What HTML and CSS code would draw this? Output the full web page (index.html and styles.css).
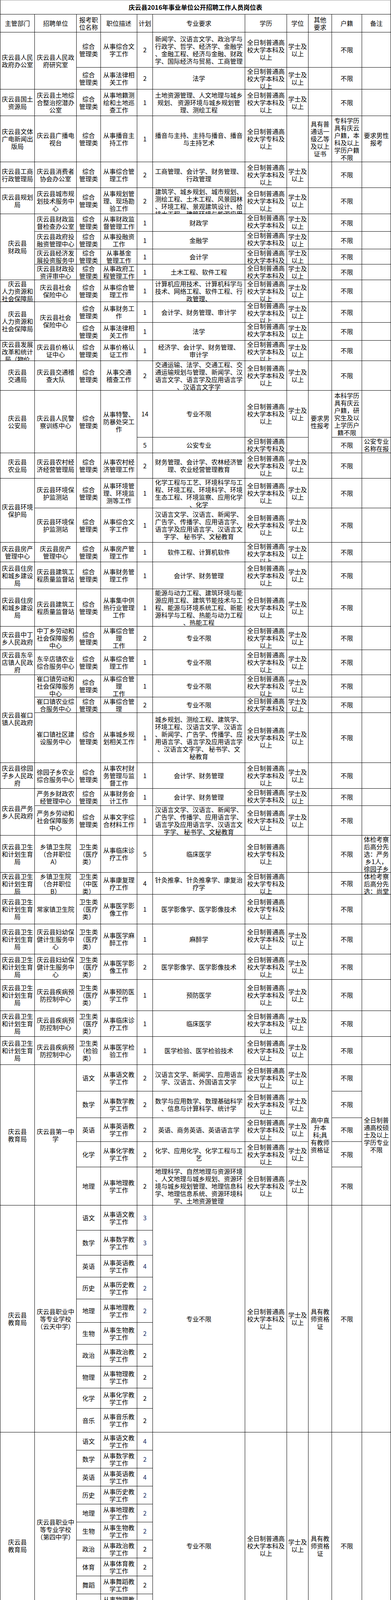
FILE: index.html
```html
<!DOCTYPE html>
<html lang="zh-CN">
<head>
<meta charset="utf-8">
<title>庆云县2016年事业单位公开招聘工作人员岗位表</title>
<link rel="stylesheet" href="styles.css">
</head>
<body>
<div class="sheet">
  <div class="c title"><span>庆云县2016年事业单位公开招聘工作人员岗位表</span></div>

  <div class="c"><span>主管部门</span></div>
  <div class="c"><span>招聘单位</span></div>
  <div class="c"><span>报考职<br>位名称</span></div>
  <div class="c"><span>职位描述</span></div>
  <div class="c"><span>计划</span></div>
  <div class="c"><span>专业要求</span></div>
  <div class="c"><span>学历</span></div>
  <div class="c"><span>学位</span></div>
  <div class="c"><span>其他<br>要求</span></div>
  <div class="c"><span>户籍</span></div>
  <div class="c"><span>备注</span></div>

  <!-- 政府办 -->
  <div class="c r2"><span>庆云县人民<br>政府办公室</span></div>
  <div class="c r2"><span>庆云县人民政<br>府研究室</span></div>
  <div class="c"><span>综合<br>管理类</span></div>
  <div class="c"><span>从事综合文<br>字工作</span></div>
  <div class="c"><span>2</span></div>
  <div class="c"><span>新闻学、汉语言文学、政治学与<br>行政学、哲学、经济学、金融学<br>、金融工程、经济与金融、财政<br>学、国际经济与贸易、工商管理</span></div>
  <div class="c"><span>全日制普通高<br>校大学本科及<br>以上</span></div>
  <div class="c"><span>学士及<br>以上</span></div>
  <div class="c"></div>
  <div class="c"><span>不限</span></div>
  <div class="c"></div>

  <div class="c"><span>综合<br>管理类</span></div>
  <div class="c"><span>从事法律相<br>关工作</span></div>
  <div class="c"><span>2</span></div>
  <div class="c"><span>法学</span></div>
  <div class="c"><span>全日制普通高<br>校大学本科及<br>以上</span></div>
  <div class="c"><span>学士及<br>以上</span></div>
  <div class="c"></div>
  <div class="c"><span>不限</span></div>
  <div class="c"></div>

  <!-- 国土 -->
  <div class="c"><span>庆云县国土<br>资源局</span></div>
  <div class="c"><span>庆云县土地综<br>合整治挖潜办<br>公室</span></div>
  <div class="c"><span>综合<br>管理类</span></div>
  <div class="c"><span>从事地籍测<br>绘和土地巡<br>查工作</span></div>
  <div class="c"><span>1</span></div>
  <div class="c"><span>土地资源管理、人文地理与城乡<br>规划、 资源环境与城乡规划管<br>理、测绘工程</span></div>
  <div class="c"><span>全日制普通高<br>校大学本科及<br>以上</span></div>
  <div class="c"><span>学士及<br>以上</span></div>
  <div class="c"></div>
  <div class="c"><span>不限</span></div>
  <div class="c"></div>

  <!-- 文体 -->
  <div class="c"><span>庆云县文体<br>广电新闻出<br>版局</span></div>
  <div class="c"><span>庆云县广播电<br>视台</span></div>
  <div class="c"><span>综合<br>管理类</span></div>
  <div class="c"><span>从事播音主<br>持工作</span></div>
  <div class="c"><span>1</span></div>
  <div class="c"><span>播音与主持、主持与播音、播音<br>与主持艺术</span></div>
  <div class="c"><span>全日制普通高<br>校大学专科及<br>以上</span></div>
  <div class="c"></div>
  <div class="c"><span>具有普<br>通话一<br>级乙等<br>及以上<br>证书</span></div>
  <div class="c"><span>专科学历<br>具有庆云<br>户籍，本<br>科及以上<br>学历户籍<br>不限</span></div>
  <div class="c"><span>要求男性<br>报考</span></div>

  <!-- 工商 -->
  <div class="c"><span>庆云县工商<br>行政管理局</span></div>
  <div class="c"><span>庆云县消费者<br>协会办公室</span></div>
  <div class="c"><span>综合<br>管理类</span></div>
  <div class="c"><span>从事综合管<br>理工作</span></div>
  <div class="c"><span>2</span></div>
  <div class="c"><span>工商管理、会计学、财务管理、<br>行政管理</span></div>
  <div class="c"><span>全日制普通高<br>校大学本科及<br>以上</span></div>
  <div class="c"><span>学士及<br>以上</span></div>
  <div class="c"></div>
  <div class="c"><span>不限</span></div>
  <div class="c"></div>

  <!-- 规划 -->
  <div class="c"><span>庆云县规划<br>局</span></div>
  <div class="c"><span>庆云县城市规<br>划技术服务中<br>心</span></div>
  <div class="c"><span>综合<br>管理类</span></div>
  <div class="c"><span>从事规划管<br>理、现场勘<br>验工作</span></div>
  <div class="c"><span>2</span></div>
  <div class="c"><span>建筑学、城乡规划、城市规划、<br>测绘工程、土木工程、风景园林<br>、环境工程、景观建筑设计、给<br>排水工程、建筑环境与能源应用<br>工程</span></div>
  <div class="c"><span>全日制普通高<br>校大学本科及<br>以上</span></div>
  <div class="c"><span>学士及<br>以上</span></div>
  <div class="c"></div>
  <div class="c"><span>不限</span></div>
  <div class="c"></div>

  <!-- 财政 -->
  <div class="c r4"><span>庆云县<br>财政局</span></div>
  <div class="c"><span>庆云县财政监<br>督检查办公室</span></div>
  <div class="c"><span>综合<br>管理类</span></div>
  <div class="c"><span>从事财政监<br>督管理工作</span></div>
  <div class="c"><span>1</span></div>
  <div class="c"><span>财政学</span></div>
  <div class="c"><span>全日制普通高<br>校大学本科及<br>以上</span></div>
  <div class="c"><span>学士及<br>以上</span></div>
  <div class="c"></div>
  <div class="c"><span>不限</span></div>
  <div class="c"></div>

  <div class="c"><span>庆云县政府投<br>融资管理中心</span></div>
  <div class="c"><span>综合<br>管理类</span></div>
  <div class="c"><span>从事投融资<br>工作</span></div>
  <div class="c"><span>1</span></div>
  <div class="c"><span>金融学</span></div>
  <div class="c"><span>全日制普通高<br>校大学本科及<br>以上</span></div>
  <div class="c"><span>学士及<br>以上</span></div>
  <div class="c"></div>
  <div class="c"><span>不限</span></div>
  <div class="c"></div>

  <div class="c"><span>庆云县经济发<br>展投资服务中<br>心</span></div>
  <div class="c"><span>综合<br>管理类</span></div>
  <div class="c"><span>从事基金<br>管理工作</span></div>
  <div class="c"><span>1</span></div>
  <div class="c"><span>会计学</span></div>
  <div class="c"><span>全日制普通高<br>校大学本科及<br>以上</span></div>
  <div class="c"><span>学士及<br>以上</span></div>
  <div class="c"></div>
  <div class="c"><span>不限</span></div>
  <div class="c"></div>

  <div class="c"><span>庆云县财政投<br>资评审中心</span></div>
  <div class="c"><span>综合<br>管理类</span></div>
  <div class="c"><span>从事政府工<br>程管理工作</span></div>
  <div class="c"><span>1</span></div>
  <div class="c"><span>土木工程、软件工程</span></div>
  <div class="c"><span>全日制普通高<br>校大学本科及<br>以上</span></div>
  <div class="c"><span>学士及<br>以上</span></div>
  <div class="c"></div>
  <div class="c"><span>不限</span></div>
  <div class="c"></div>

  <!-- 人社 1 -->
  <div class="c"><span>庆云县<br>人力资源和<br>社会保障局</span></div>
  <div class="c"><span>庆云县社会<br>保险中心</span></div>
  <div class="c"><span>综合<br>管理类</span></div>
  <div class="c"><span>从事综合管<br>理工作</span></div>
  <div class="c"><span>1</span></div>
  <div class="c"><span>计算机应用技术、计算机科学与<br>技术、网络工程、软件工程、行<br>政管理、</span></div>
  <div class="c"><span>全日制普通高<br>校大学本科及<br>以上</span></div>
  <div class="c"><span>学士及<br>以上</span></div>
  <div class="c"></div>
  <div class="c"><span>不限</span></div>
  <div class="c"></div>

  <!-- 人社 2 -->
  <div class="c r2"><span>庆云县<br>人力资源和<br>社会保障局</span></div>
  <div class="c r2"><span>庆云县社会<br>保险中心</span></div>
  <div class="c"><span>综合<br>管理类</span></div>
  <div class="c"><span>从事财务工<br>作</span></div>
  <div class="c"><span>1</span></div>
  <div class="c"><span>会计学、财务管理、审计学</span></div>
  <div class="c"><span>全日制普通高<br>校大学本科及<br>以上</span></div>
  <div class="c"><span>学士及<br>以上</span></div>
  <div class="c"></div>
  <div class="c"><span>不限</span></div>
  <div class="c"></div>

  <div class="c"><span>综合<br>管理类</span></div>
  <div class="c"><span>从事法律相<br>关工作</span></div>
  <div class="c"><span>1</span></div>
  <div class="c"><span>法学</span></div>
  <div class="c"><span>全日制普通高<br>校大学本科及<br>以上</span></div>
  <div class="c"><span>学士及<br>以上</span></div>
  <div class="c"></div>
  <div class="c"><span>不限</span></div>
  <div class="c"></div>

  <!-- 发改 -->
  <div class="c"><span>庆云县发展<br>改革和统计<br>局（物价<br>局）</span></div>
  <div class="c"><span>庆云县价格认<br>证中心</span></div>
  <div class="c"><span>综合<br>管理类</span></div>
  <div class="c"><span>从事价格认<br>证工作</span></div>
  <div class="c"><span>1</span></div>
  <div class="c"><span>经济学、会计学、财务管理、<br>审计学</span></div>
  <div class="c"><span>全日制普通高<br>校大学本科及<br>以上</span></div>
  <div class="c"><span>学士及<br>以上</span></div>
  <div class="c"></div>
  <div class="c"><span>不限</span></div>
  <div class="c"></div>

  <!-- 交通 -->
  <div class="c"><span>庆云县<br>交通局</span></div>
  <div class="c"><span>庆云县交通稽<br>查大队</span></div>
  <div class="c"><span>综合<br>管理类</span></div>
  <div class="c"><span>从事交通<br>稽查工作</span></div>
  <div class="c"><span>2</span></div>
  <div class="c"><span>交通运输、法学、交通工程、交<br>通运输规划与管理、新闻学、汉<br>语言文学、语言学及应用语言学<br>、汉语言文字学</span></div>
  <div class="c"><span>全日制普通高<br>校大学本科及<br>以上</span></div>
  <div class="c"><span>学士及<br>以上</span></div>
  <div class="c"></div>
  <div class="c"><span>不限</span></div>
  <div class="c"></div>

  <!-- 公安 -->
  <div class="c r2"><span>庆云县<br>公安局</span></div>
  <div class="c r2"><span>庆云县人民警<br>察训练中心</span></div>
  <div class="c r2"><span>综合<br>管理类</span></div>
  <div class="c r2"><span>从事特警、<br>防暴处突工<br>作</span></div>
  <div class="c"><span>14</span></div>
  <div class="c"><span>专业不限</span></div>
  <div class="c"><span>全日制普通高<br>校大学本科及<br>以上</span></div>
  <div class="c"><span>学士及<br>以上</span></div>
  <div class="c r2"><span>要求男<br>性报考</span></div>
  <div class="c"><span>本科学历<br>具有庆云<br>户籍，研<br>究生及以<br>上学历户<br>籍不限</span></div>
  <div class="c"></div>

  <div class="c"><span>5</span></div>
  <div class="c"><span>公安专业</span></div>
  <div class="c"><span>全日制普通高<br>校大学专科及<br>以上</span></div>
  <div class="c"></div>
  <div class="c"><span>不限</span></div>
  <div class="c"><span>公安专业<br>名称在报<br>考时以毕<br>业证为准</span></div>

  <!-- 农业 -->
  <div class="c"><span>庆云县<br>农业局</span></div>
  <div class="c"><span>庆云县农村经<br>济经营管理局</span></div>
  <div class="c"><span>综合<br>管理类</span></div>
  <div class="c"><span>从事农村经<br>济管理工作</span></div>
  <div class="c"><span>2</span></div>
  <div class="c"><span>财务管理、会计学、农林经济管<br>理、农业经营管理教育</span></div>
  <div class="c"><span>全日制普通高<br>校大学本科及<br>以上</span></div>
  <div class="c"><span>学士及<br>以上</span></div>
  <div class="c"></div>
  <div class="c"><span>不限</span></div>
  <div class="c"></div>

  <!-- 环保 -->
  <div class="c r2"><span>庆云县环境<br>保护局</span></div>
  <div class="c"><span>庆云县环境保<br>护监测站</span></div>
  <div class="c"><span>综合<br>管理类</span></div>
  <div class="c"><span>从事环境管<br>理、环境监<br>测等工作</span></div>
  <div class="c"><span>1</span></div>
  <div class="c"><span>化学工程与工艺、环境科学与工<br>程、环境工程、环境科学、环境<br>生态工程、环境监察、应用化学<br>、化学</span></div>
  <div class="c"><span>全日制普通高<br>校大学本科及<br>以上</span></div>
  <div class="c"><span>学士及<br>以上</span></div>
  <div class="c"></div>
  <div class="c"><span>不限</span></div>
  <div class="c"></div>

  <div class="c"><span>庆云县环境保<br>护监测站</span></div>
  <div class="c"><span>综合<br>管理类</span></div>
  <div class="c"><span>从事综合文<br>字工作</span></div>
  <div class="c"><span>1</span></div>
  <div class="c"><span>汉语言文学、汉语言、新闻学、<br>广告学、传播学、应用语言学、<br>语言学及应用语言学、汉语言文<br>字学、 秘书学、文秘教育</span></div>
  <div class="c"><span>全日制普通高<br>校大学本科及<br>以上</span></div>
  <div class="c"><span>学士及<br>以上</span></div>
  <div class="c"></div>
  <div class="c"><span>不限</span></div>
  <div class="c"></div>

  <!-- 房产 -->
  <div class="c"><span>庆云县房产<br>管理中心</span></div>
  <div class="c"><span>庆云县房产<br>管理中心</span></div>
  <div class="c"><span>综合<br>管理类</span></div>
  <div class="c"><span>从事房产管<br>理工作</span></div>
  <div class="c"><span>1</span></div>
  <div class="c"><span>软件工程、计算机软件</span></div>
  <div class="c"><span>全日制普通高<br>校大学本科及<br>以上</span></div>
  <div class="c"><span>学士及<br>以上</span></div>
  <div class="c"></div>
  <div class="c"><span>不限</span></div>
  <div class="c"></div>

  <!-- 住建 -->
  <div class="c"><span>庆云县住房<br>和城乡建设<br>局</span></div>
  <div class="c"><span>庆云县建筑工<br>程质量监督站</span></div>
  <div class="c"><span>综合<br>管理类</span></div>
  <div class="c"><span>从事财务管<br>理工作</span></div>
  <div class="c"><span>1</span></div>
  <div class="c"><span>会计学、财务管理</span></div>
  <div class="c"><span>全日制普通高<br>校大学本科及<br>以上</span></div>
  <div class="c"><span>学士及<br>以上</span></div>
  <div class="c"></div>
  <div class="c"><span>不限</span></div>
  <div class="c"></div>

  <div class="c"><span>庆云县住房<br>和城乡建设<br>局</span></div>
  <div class="c"><span>庆云县建筑工<br>程质量监督站</span></div>
  <div class="c"><span>综合<br>管理类</span></div>
  <div class="c"><span>从事集中供<br>热行业管理<br>工作</span></div>
  <div class="c"><span>1</span></div>
  <div class="c"><span>能源与动力工程、建筑环境与能<br>源应用工程、建筑节能技术与工<br>程、能源与环境系统工程、新能<br>源科学与工程、热能与动力工程<br>、热能工程</span></div>
  <div class="c"><span>全日制普通高<br>校大学本科及<br>以上</span></div>
  <div class="c"><span>学士及<br>以上</span></div>
  <div class="c"></div>
  <div class="c"><span>不限</span></div>
  <div class="c"></div>

  <!-- 中丁 -->
  <div class="c"><span>庆云县中丁<br>乡人民政府</span></div>
  <div class="c"><span>中丁乡劳动和<br>社会保障服务<br>中心</span></div>
  <div class="c"><span>综合<br>管理类</span></div>
  <div class="c"><span>从事综合管<br>理<br>工作</span></div>
  <div class="c"><span>2</span></div>
  <div class="c"><span>专业不限</span></div>
  <div class="c"><span>全日制普通高<br>校大学本科及<br>以上</span></div>
  <div class="c"><span>学士及<br>以上</span></div>
  <div class="c"></div>
  <div class="c"><span>不限</span></div>
  <div class="c"></div>

  <!-- 东辛店 -->
  <div class="c"><span>庆云县东辛<br>店镇人民政<br>府</span></div>
  <div class="c"><span>东辛店镇农业<br>综合服务中心</span></div>
  <div class="c"><span>综合<br>管理类</span></div>
  <div class="c"><span>从事综合管<br>理工作</span></div>
  <div class="c"><span>1</span></div>
  <div class="c"><span>专业不限</span></div>
  <div class="c"><span>全日制普通高<br>校大学本科及<br>以上</span></div>
  <div class="c"><span>学士及<br>以上</span></div>
  <div class="c"></div>
  <div class="c"><span>不限</span></div>
  <div class="c"></div>

  <!-- 崔口 -->
  <div class="c r3"><span>庆云县崔口<br>镇人民政府</span></div>
  <div class="c"><span>崔口镇劳动和<br>社会保障服务<br>中心</span></div>
  <div class="c"><span>综合<br>管理类</span></div>
  <div class="c"><span>从事综合管<br>理<br>工作</span></div>
  <div class="c"><span>1</span></div>
  <div class="c"><span>专业不限</span></div>
  <div class="c"><span>全日制普通高<br>校大学本科及<br>以上</span></div>
  <div class="c"><span>学士及<br>以上</span></div>
  <div class="c"></div>
  <div class="c"><span>不限</span></div>
  <div class="c"></div>

  <div class="c"><span>崔口镇农业综<br>合服务中心</span></div>
  <div class="c"><span>综合<br>管理类</span></div>
  <div class="c"><span>从事综合管<br>理</span></div>
  <div class="c"><span>2</span></div>
  <div class="c"><span>专业不限</span></div>
  <div class="c"><span>全日制普通高<br>校大学本科及<br>以上</span></div>
  <div class="c"><span>学士及<br>以上</span></div>
  <div class="c"></div>
  <div class="c"><span>不限</span></div>
  <div class="c"></div>

  <div class="c"><span>崔口镇社区建<br>设服务中心</span></div>
  <div class="c"><span>综合<br>管理类</span></div>
  <div class="c"><span>从事城乡规<br>划相关工作</span></div>
  <div class="c"><span>1</span></div>
  <div class="c"><span>城乡规划、测绘工程、建筑学、<br>环境工程、汉语言文学、汉语言<br>、新闻学、广告学、传播学、应<br>用语言学、语言学及应用语言学<br>、汉语言文字学、 秘书学、文<br>秘教育</span></div>
  <div class="c"><span>全日制普通高<br>校大学本科及<br>以上</span></div>
  <div class="c"><span>学士及<br>以上</span></div>
  <div class="c"></div>
  <div class="c"><span>不限</span></div>
  <div class="c"></div>

  <!-- 徐园子 -->
  <div class="c"><span>庆云县徐园<br>子乡人民政<br>府</span></div>
  <div class="c"><span>徐园子乡农业<br>综合服务中心</span></div>
  <div class="c"><span>综合<br>管理类</span></div>
  <div class="c"><span>从事农村财<br>务管理与监<br>督工作</span></div>
  <div class="c"><span>1</span></div>
  <div class="c"><span>会计学、财务管理</span></div>
  <div class="c"><span>全日制普通高<br>校大学本科及<br>以上</span></div>
  <div class="c"><span>学士及<br>以上</span></div>
  <div class="c"></div>
  <div class="c"><span>不限</span></div>
  <div class="c"></div>

  <!-- 严务 -->
  <div class="c r2"><span>庆云县严务<br>乡人民政府</span></div>
  <div class="c"><span>严务乡财政农<br>经管理中心</span></div>
  <div class="c"><span>综合<br>管理类</span></div>
  <div class="c"><span>从事财务会<br>计工作</span></div>
  <div class="c"><span>1</span></div>
  <div class="c"><span>会计学、财务管理</span></div>
  <div class="c"><span>全日制普通高<br>校大学本科及<br>以上</span></div>
  <div class="c"><span>学士及<br>以上</span></div>
  <div class="c"></div>
  <div class="c"><span>不限</span></div>
  <div class="c"></div>

  <div class="c"><span>严务乡劳动和<br>社会保障服务<br>中心</span></div>
  <div class="c"><span>综合<br>管理类</span></div>
  <div class="c"><span>从事文字综<br>合材料工作</span></div>
  <div class="c"><span>1</span></div>
  <div class="c"><span>汉语言文学、汉语言、新闻学、<br>广告学、传播学、应用语言学、<br>语言学及应用语言学、汉语言文<br>字学、 秘书学、文秘教育</span></div>
  <div class="c"><span>全日制普通高<br>校大学本科及<br>以上</span></div>
  <div class="c"><span>学士及<br>以上</span></div>
  <div class="c"></div>
  <div class="c"><span>不限</span></div>
  <div class="c"></div>

  <!-- 卫生 A -->
  <div class="c"><span>庆云县卫生<br>和计划生育<br>局</span></div>
  <div class="c"><span>乡镇卫生院<br>（合并职位<br>A）</span></div>
  <div class="c"><span>卫生类<br>（医疗<br>类）</span></div>
  <div class="c"><span>从事临床诊<br>疗工作</span></div>
  <div class="c"><span>5</span></div>
  <div class="c"><span>临床医学</span></div>
  <div class="c"><span>全日制普通高<br>校大学专科及<br>以上</span></div>
  <div class="c"></div>
  <div class="c"></div>
  <div class="c"><span>不限</span></div>
  <div class="c"><span>体检考察<br>后高分先<br>选：严务<br>乡1人，<br>徐园子乡<br>1人，中丁<br>乡1人</span></div>

  <!-- 卫生 B -->
  <div class="c"><span>庆云县卫生<br>和计划生育<br>局</span></div>
  <div class="c"><span>乡镇卫生院<br>（合并职位<br>B）</span></div>
  <div class="c"><span>卫生类<br>（中医<br>类）</span></div>
  <div class="c"><span>从事康复理<br>疗工作</span></div>
  <div class="c"><span>4</span></div>
  <div class="c"><span>针灸推拿、针灸推拿学、康复治<br>疗学</span></div>
  <div class="c"><span>全日制普通高<br>校大学专科及<br>以上</span></div>
  <div class="c"></div>
  <div class="c"></div>
  <div class="c"><span>不限</span></div>
  <div class="c"><span>体检考察<br>后高分先<br>选：尚堂<br>镇1人</span></div>

  <!-- 常家镇 -->
  <div class="c"><span>庆云县卫生<br>和计划生育<br>局</span></div>
  <div class="c"><span>常家镇卫生院</span></div>
  <div class="c"><span>卫生类<br>（医疗<br>类）</span></div>
  <div class="c"><span>从事医学影<br>像工作</span></div>
  <div class="c"><span>1</span></div>
  <div class="c"><span>医学影像学、医学影像技术</span></div>
  <div class="c"><span>全日制普通高<br>校大学专科及<br>以上</span></div>
  <div class="c"></div>
  <div class="c"></div>
  <div class="c"><span>不限</span></div>
  <div class="c"></div>

  <!-- 妇幼 -->
  <div class="c"><span>庆云县卫生<br>和计划生育<br>局</span></div>
  <div class="c"><span>庆云县妇幼保<br>健计生服务中<br>心</span></div>
  <div class="c"><span>卫生类<br>（医疗<br>类）</span></div>
  <div class="c"><span>从事医学麻<br>醉工作</span></div>
  <div class="c"><span>1</span></div>
  <div class="c"><span>麻醉学</span></div>
  <div class="c"><span>全日制普通高<br>校大学本科及<br>以上</span></div>
  <div class="c"><span>学士及<br>以上</span></div>
  <div class="c"></div>
  <div class="c"><span>不限</span></div>
  <div class="c"></div>

  <div class="c"><span>庆云县卫生<br>和计划生育<br>局</span></div>
  <div class="c"><span>庆云县妇幼保<br>健计生服务中<br>心</span></div>
  <div class="c"><span>卫生类<br>（医疗<br>类）</span></div>
  <div class="c"><span>从事医学影<br>像工作</span></div>
  <div class="c"><span>2</span></div>
  <div class="c"><span>医学影像学、医学影像技术</span></div>
  <div class="c"><span>全日制普通高<br>校大学本科及<br>以上</span></div>
  <div class="c"><span>学士及<br>以上</span></div>
  <div class="c"></div>
  <div class="c"><span>不限</span></div>
  <div class="c"></div>

  <!-- 疾控 -->
  <div class="c"><span>庆云县卫生<br>和计划生育<br>局</span></div>
  <div class="c"><span>庆云县疾病预<br>防控制中心</span></div>
  <div class="c"><span>卫生类<br>（医疗<br>类）</span></div>
  <div class="c"><span>从事预防医<br>学工作</span></div>
  <div class="c"><span>1</span></div>
  <div class="c"><span>预防医学</span></div>
  <div class="c"><span>全日制普通高<br>校大学本科及<br>以上</span></div>
  <div class="c"><span>学士及<br>以上</span></div>
  <div class="c"></div>
  <div class="c"><span>不限</span></div>
  <div class="c"></div>

  <div class="c"><span>庆云县卫生<br>和计划生育<br>局</span></div>
  <div class="c"><span>庆云县疾病预<br>防控制中心</span></div>
  <div class="c"><span>卫生类<br>（医疗<br>类）</span></div>
  <div class="c"><span>从事临床诊<br>疗工作</span></div>
  <div class="c"><span>1</span></div>
  <div class="c"><span>临床医学</span></div>
  <div class="c"><span>全日制普通高<br>校大学本科及<br>以上</span></div>
  <div class="c"><span>学士及<br>以上</span></div>
  <div class="c"></div>
  <div class="c"><span>不限</span></div>
  <div class="c"></div>

  <div class="c"><span>庆云县卫生<br>和计划生育<br>局</span></div>
  <div class="c"><span>庆云县疾病预<br>防控制中心</span></div>
  <div class="c"><span>卫生类<br>（检验<br>类）</span></div>
  <div class="c"><span>从事医学检<br>验工作</span></div>
  <div class="c"><span>1</span></div>
  <div class="c"><span>医学检验、医学检验技术</span></div>
  <div class="c"><span>全日制普通高<br>校大学本科及<br>以上</span></div>
  <div class="c"><span>学士及<br>以上</span></div>
  <div class="c"></div>
  <div class="c"><span>不限</span></div>
  <div class="c"></div>

  <!-- 第一中学 -->
  <div class="c r5"><span>庆云县<br>教育局</span></div>
  <div class="c r5"><span>庆云县第一中<br>学</span></div>
  <div class="c"><span>语文</span></div>
  <div class="c"><span>从事语文教<br>学工作</span></div>
  <div class="c"><span>2</span></div>
  <div class="c"><span>汉语言文学、新闻学、应用语言<br>学、汉语言、外国语言文学</span></div>
  <div class="c"><span>全日制普通高<br>校大学本科及<br>以上</span></div>
  <div class="c"><span>学士及<br>以上</span></div>
  <div class="c r5"><span>高中直<br>升本<br>科;具<br>有教师<br>资格证</span></div>
  <div class="c"><span>不限</span></div>
  <div class="c r5"><span>全日制普<br>通高校硕<br>士及以上<br>学历专业<br>不限</span></div>

  <div class="c"><span>数学</span></div>
  <div class="c"><span>从事数学教<br>学工作</span></div>
  <div class="c"><span>2</span></div>
  <div class="c"><span>数学与应用数学、数理基础科学<br>、信息与计算科学、统计学</span></div>
  <div class="c"><span>全日制普通高<br>校大学本科及<br>以上</span></div>
  <div class="c"><span>学士及<br>以上</span></div>
  <div class="c"><span>不限</span></div>

  <div class="c"><span>英语</span></div>
  <div class="c"><span>从事英语教<br>学工作</span></div>
  <div class="c"><span>2</span></div>
  <div class="c"><span>英语、商务英语、英语语言学</span></div>
  <div class="c"><span>全日制普通高<br>校大学本科及<br>以上</span></div>
  <div class="c"><span>学士及<br>以上</span></div>
  <div class="c"><span>不限</span></div>

  <div class="c"><span>化学</span></div>
  <div class="c"><span>从事化学教<br>学工作</span></div>
  <div class="c"><span>2</span></div>
  <div class="c"><span>化学、应用化学、化学工程与工<br>艺</span></div>
  <div class="c"><span>全日制普通高<br>校大学本科及<br>以上</span></div>
  <div class="c"><span>学士及<br>以上</span></div>
  <div class="c"><span>不限</span></div>

  <div class="c"><span>地理</span></div>
  <div class="c"><span>从事地理教<br>学工作</span></div>
  <div class="c"><span>2</span></div>
  <div class="c"><span>地理科学、自然地理与资源环境<br>、人文地理与城乡规划、资源环<br>境与城乡规划管理、地理信息科<br>学、地理信息系统、资源环境科<br>学、土地资源管理</span></div>
  <div class="c"><span>全日制普通高<br>校大学本科及<br>以上</span></div>
  <div class="c"><span>学士及<br>以上</span></div>
  <div class="c"><span>不限</span></div>

  <!-- 职业中专（云天中学） -->
  <div class="c r10"><span>庆云县<br>教育局</span></div>
  <div class="c r10"><span>庆云县职业中<br>等专业学校<br>（云天中学）</span></div>
  <div class="c"><span>语文</span></div>
  <div class="c"><span>从事语文教<br>学工作</span></div>
  <div class="c nb"><span>3</span></div>
  <div class="c r10"><span>专业不限</span></div>
  <div class="c r10"><span>全日制普通高<br>校大学本科及<br>以上</span></div>
  <div class="c r10"><span>学士及<br>以上</span></div>
  <div class="c r10"><span>具有教<br>师资格<br>证</span></div>
  <div class="c r10"><span>不限</span></div>
  <div class="c r10"></div>

  <div class="c"><span>数学</span></div>
  <div class="c"><span>从事数学教<br>学工作</span></div>
  <div class="c nb"><span>3</span></div>
  <div class="c"><span>英语</span></div>
  <div class="c"><span>从事英语教<br>学工作</span></div>
  <div class="c nb"><span>4</span></div>
  <div class="c"><span>历史</span></div>
  <div class="c"><span>从事历史教<br>学工作</span></div>
  <div class="c nb"><span>2</span></div>
  <div class="c"><span>地理</span></div>
  <div class="c"><span>从事地理教<br>学工作</span></div>
  <div class="c nb"><span>2</span></div>
  <div class="c"><span>生物</span></div>
  <div class="c"><span>从事生物教<br>学工作</span></div>
  <div class="c nb"><span>2</span></div>
  <div class="c"><span>政治</span></div>
  <div class="c"><span>从事政治教<br>学工作</span></div>
  <div class="c"><span>2</span></div>
  <div class="c"><span>物理</span></div>
  <div class="c"><span>从事物理教<br>学工作</span></div>
  <div class="c"><span>2</span></div>
  <div class="c"><span>化学</span></div>
  <div class="c"><span>从事化学教<br>学工作</span></div>
  <div class="c"><span>2</span></div>
  <div class="c"><span>音乐</span></div>
  <div class="c"><span>从事音乐教<br>学工作</span></div>
  <div class="c"><span>2</span></div>

  <!-- 职业中专（第四中学）与明德 -->
  <div class="c r13"><span>庆云县<br>教育局</span></div>
  <div class="c r11"><span>庆云县职业中<br>等专业学校<br>（第四中学）</span></div>
  <div class="c"><span>语文</span></div>
  <div class="c"><span>从事语文教<br>学工作</span></div>
  <div class="c nb"><span>4</span></div>
  <div class="c r13"><span>专业不限</span></div>
  <div class="c r13"><span>全日制普通高<br>校大学本科及<br>以上</span></div>
  <div class="c r13"><span>学士及<br>以上</span></div>
  <div class="c r13"><span>具有教<br>师资格<br>证</span></div>
  <div class="c r13"><span>不限</span></div>
  <div class="c r13"></div>

  <div class="c"><span>数学</span></div>
  <div class="c"><span>从事数学教<br>学工作</span></div>
  <div class="c nb"><span>2</span></div>
  <div class="c"><span>英语</span></div>
  <div class="c"><span>从事英语教<br>学工作</span></div>
  <div class="c nb"><span>4</span></div>
  <div class="c"><span>历史</span></div>
  <div class="c"><span>从事历史教<br>学工作</span></div>
  <div class="c nb"><span>2</span></div>
  <div class="c"><span>地理</span></div>
  <div class="c"><span>从事地理教<br>学工作</span></div>
  <div class="c nb"><span>2</span></div>
  <div class="c"><span>生物</span></div>
  <div class="c"><span>从事生物教<br>学工作</span></div>
  <div class="c nb"><span>2</span></div>
  <div class="c"><span>政治</span></div>
  <div class="c"><span>从事政治教<br>学工作</span></div>
  <div class="c"><span>2</span></div>
  <div class="c"><span>体育</span></div>
  <div class="c"><span>从事体育教<br>学工作</span></div>
  <div class="c"><span>2</span></div>
  <div class="c"><span>舞蹈</span></div>
  <div class="c"><span>从事舞蹈教<br>学工作</span></div>
  <div class="c"><span>2</span></div>
  <div class="c"><span>物理</span></div>
  <div class="c"><span>从事物理教<br>学工作</span></div>
  <div class="c"><span>2</span></div>
  <div class="c"><span>化学</span></div>
  <div class="c"><span>从事化学教<br>学工作</span></div>
  <div class="c"><span>2</span></div>

  <div class="c r2"><span>庆云县明德实<br>验学校</span></div>
  <div class="c"><span>语文</span></div>
  <div class="c"><span>从事语文教<br>学工作</span></div>
  <div class="c"><span>1</span></div>
  <div class="c"><span>数学</span></div>
  <div class="c"><span>从事数学教<br>学工作</span></div>
  <div class="c"><span>1</span></div>
</div>
</body>
</html>
```

FILE: styles.css
```css
html, body {
  margin: 0;
  padding: 0;
  background: #ffffff;
}

body {
  font-family: "Noto Sans CJK SC", "Noto Sans CJK JP", "DejaVu Sans", sans-serif;
  font-size: 16px;
  font-weight: 400;
  line-height: 19px;
  color: #000000;
}

.sheet {
  display: grid;
  width: max-content;
  grid-template-columns: 88px 107px 62px 93px 40px 236px 107px 55px 60px 77px 74px;
  grid-template-rows:
    36px 46px
    90px 56px 68px 118px 66px 67px
    45px 45px 39px 40px
    56px 53px 46px 52px 76px
    120px 40px 65px 76px 88px
    50px 69px 96px 60px 64px
    57px 40px 128px 66px 44px 76px
    95px 56px 76px 77px 65px 80px 66px 72px
    68px 68px 61px 65px 98px
    64px 64px 56px 56px 60px 56px 56px 56px 52px 61px
    46px 46px 46px 46px 46px 46px 46px 46px 46px 46px 37px
    46px 38px;
  border-top: 1px solid #9a9a9a;
  border-left: 1px solid #000000;
}

.c {
  display: flex;
  min-width: 0;
  min-height: 0;
  overflow: hidden;
  border-right: 1px solid #000000;
  border-bottom: 1px solid #000000;
  text-align: center;
  white-space: nowrap;
  background: #ffffff;
}

.c > span {
  margin: auto;
}

.title {
  grid-column: span 11;
  font-weight: 700;
}

.r2 { grid-row: span 2; }
.r3 { grid-row: span 3; }
.r4 { grid-row: span 4; }
.r5 { grid-row: span 5; }
.r10 { grid-row: span 10; }
.r11 { grid-row: span 11; }
.r13 { grid-row: span 13; }

.nb {
  color: #1a2f66;
}
```
